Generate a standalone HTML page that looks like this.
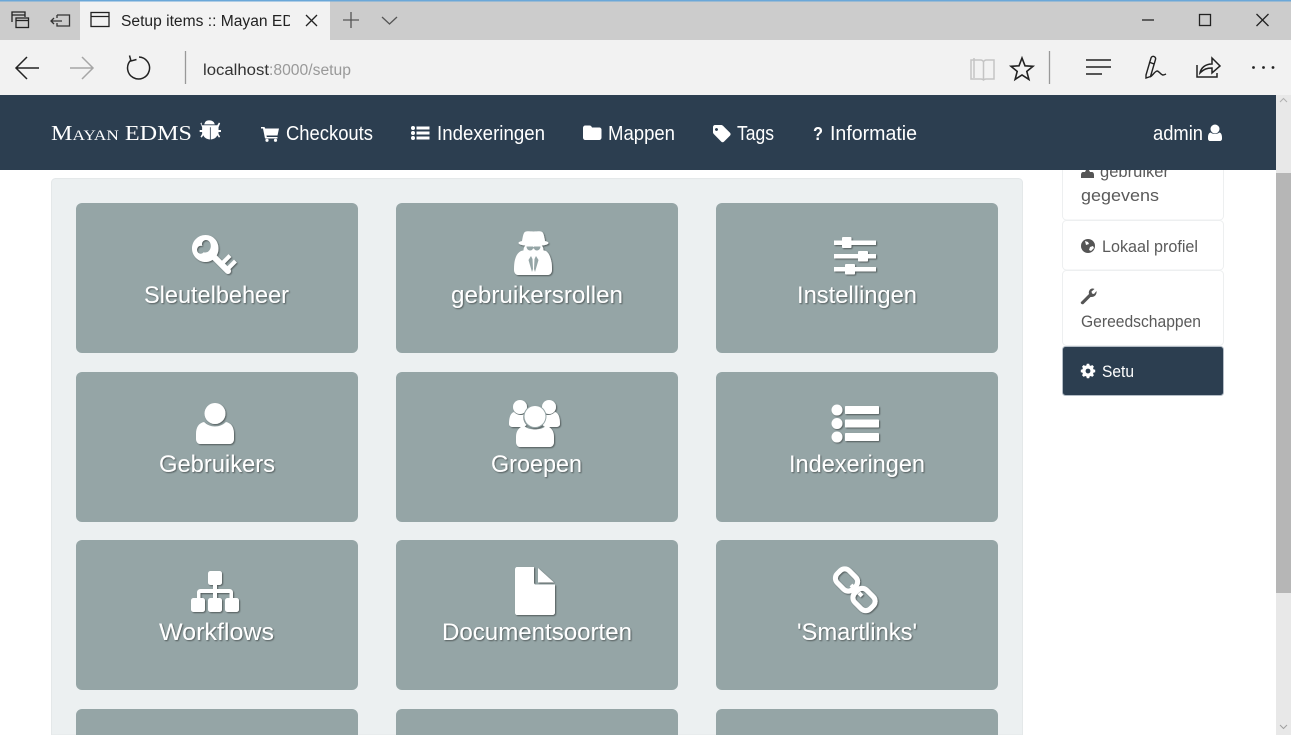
<!DOCTYPE html>
<html><head><meta charset="utf-8"><title>Setup items</title>
<style>html,body{margin:0;padding:0;background:#fff;overflow:hidden;width:1291px;height:735px}svg{display:block}text{font-family:"Liberation Sans",sans-serif}</style>
</head><body>
<svg width="1291" height="735" viewBox="0 0 1291 735" xmlns="http://www.w3.org/2000/svg">
<defs>
<filter id="s" x="-20%" y="-20%" width="140%" height="140%"><feDropShadow dx="1" dy="1" stdDeviation="0.7" flood-color="#000" flood-opacity=".45"/></filter>
<clipPath id="tabc"><rect x="118" y="5" width="172" height="30"/></clipPath>
<clipPath id="sidec"><rect x="1050" y="170" width="200" height="40"/></clipPath>
</defs>
<rect width="1291" height="735" fill="#fff"/>

<!-- page: well and tiles -->
<path d="M51.500 735V182.500c0-2.200 1.800-4 4-4h963c2.200 0 4 1.800 4 4V735z" fill="#ecf0f1" stroke="#e4e8e9"/>
<g fill="#95a5a6">
<rect x="76" y="203" width="282" height="150" rx="6"/><rect x="396" y="203" width="282" height="150" rx="6"/><rect x="716" y="203" width="282" height="150" rx="6"/>
<rect x="76" y="372" width="282" height="150" rx="6"/><rect x="396" y="372" width="282" height="150" rx="6"/><rect x="716" y="372" width="282" height="150" rx="6"/>
<rect x="76" y="540" width="282" height="150" rx="6"/><rect x="396" y="540" width="282" height="150" rx="6"/><rect x="716" y="540" width="282" height="150" rx="6"/>
<path d="M76 735V715c0-3.300 2.700-6 6-6h270c3.300 0 6 2.700 6 6v20zM396 735V715c0-3.300 2.700-6 6-6h270c3.300 0 6 2.700 6 6v20zM716 735V715c0-3.300 2.700-6 6-6h270c3.300 0 6 2.700 6 6v20z"/>
</g>

<g filter="url(#s)" fill="#fff">
<!-- key -->
<g>
<path fill-rule="evenodd" d="M192 248.500c0-7.500 6-13.500 13.500-13.500s13 6 13 13.500-6 13.500-13 13.500-13.500-6-13.500-13.500zM197 250c0 2 1.500 3.700 3.500 3.700 1.300 0 2.400-.6 3.100-1.500 1 .4 2 .4 3 .1 2.500-.7 4.200-3.300 4.200-6.300 0-3-1.600-6-4.700-6-2 0-3.500 1.300-4 3-.3 1-.2 2 .2 3-.5-.2-1-.2-1.500-.2-2 0-3.800 1.700-3.800 4.200z"/>
<path d="M212.500 255.500L228 271" stroke="#fff" stroke-width="6" stroke-linecap="round" fill="none"/>
<path d="M223 262.500l5.500-5.500M228.500 268l5.500-5.500" stroke="#fff" stroke-width="4" stroke-linecap="square" fill="none"/>
</g>
<!-- spy -->
<path d="M524 233c1.500-2.500 4-1.500 9.500-1.500s8-1 9.500 1.500c1 2 1.500 5 2 8 2 .5 3.500 1 3.500 2s-2.500 2-5.500 2.500h-19c-3-.5-5.500-1.500-5.500-2.500s1.500-1.500 3.500-2c.5-3 1-6 2-8z"/>
<ellipse cx="533.500" cy="250" rx="10" ry="8"/>
<path d="M521 251l6-1.500c2 4 4 6 6.500 6s4.500-2 6.500-6l6 1.500c3 2 4.500 6 5.500 11 .5 3 .5 6 .5 8 0 3-2 5-4 5h-30c-2 0-4-2-4-5 0-2 0-5 .5-8 1-5 2.500-9 6.500-11z"/>
<g fill="#95a5a6">
<path d="M526 246.500h6.500c.5 0 1 .3 1 .8.2-.5.6-.8 1-.8h6c0 2-1.500 4-3.500 4-1.500 0-2.500-.8-3-2h-1c-.5 1.200-1.500 2-3 2-2 0-3.500-2-3.500-4z"/>
<path d="M531 256l-2.500 4 3.500 12 1-3-.5-10zM536 256l2.500 4-3.500 12-1-3 .5-10z"/>
</g>
<!-- sliders -->
<rect x="834" y="240.500" width="42" height="4.500"/><rect x="842" y="237" width="9.500" height="11" rx="1"/>
<rect x="834" y="254" width="42" height="4.500"/><rect x="858" y="251" width="10" height="10.500" rx="1"/>
<rect x="834" y="267" width="42" height="4.500"/><rect x="845" y="264" width="10" height="10.500" rx="1"/>
<!-- user -->
<circle cx="215" cy="413.500" r="10.500"/><path d="M204 422c3 3 7 4.500 11 4.500s8-1.500 11-4.500c5 1 8 5 8 12v5c0 3-2 5-4 5h-30c-2 0-4-2-4-5v-5c0-7 3-11 8-12z"/>
<!-- group -->
<circle cx="520" cy="407" r="7"/><circle cx="549" cy="407" r="7"/>
<path d="M514 412c2 2 4 3 7 3 1 0 2 0 2.500-.5-1 4 .5 8 3 10.500l-2.500 2h-11c-2 0-4-1-4-3 0-5 1-11 5-12zM555 412c-2 2-4 3-7 3-1 0-2 0-2.500-.5 1 4-.5 8-3 10.500l2.500 2h11c2 0 4-1 4-3 0-5-1-11-5-12z"/>
<circle cx="535" cy="416.500" r="11.500" fill="#95a5a6"/>
<circle cx="535" cy="416.500" r="10.500"/>
<path d="M524 426c3 2.500 7 3.500 11 3.500s8-1 11-3.500c5 1 8 5 8 11v5c0 3-2 5-4 5h-30c-2 0-4-2-4-5v-5c0-6 3-10 8-11z"/>
<!-- list -->
<circle cx="837" cy="410" r="5.500"/><circle cx="837" cy="423.500" r="5.500"/><circle cx="837" cy="437" r="5.500"/>
<rect x="845" y="406" width="34" height="8" rx=".8"/><rect x="845" y="419.500" width="34" height="8" rx=".8"/><rect x="845" y="433" width="34" height="8" rx=".8"/>
<!-- sitemap -->
<rect x="208" y="571" width="14" height="14" rx="2.500"/>
<path d="M213 585h4v4h12.500c2 0 3.500 1.500 3.500 3.500v6h-3.500V593H217v5.500h-4V593h-12.500v5.500H197v-6c0-2 1.500-3.500 3.500-3.500H213z"/>
<rect x="191" y="598" width="14" height="14" rx="2.500"/><rect x="208" y="598" width="14" height="14" rx="2.500"/><rect x="225" y="598" width="14" height="14" rx="2.500"/>
<!-- file -->
<path d="M517 567h17v16c0 1 .8 1.500 1.500 1.500H555v28c0 1.200-1 2.500-2.500 2.500h-35.500c-1.200 0-2-1.200-2-2.500v-43c0-1.500.8-2.500 2-2.500zM538 568l16 14.500h-16z"/>
<!-- chain -->
<g fill="none" stroke="#fff" stroke-width="5">
<rect x="835.500" y="571.500" width="22" height="17" rx="6.500" transform="rotate(45 846.500 580)"/>
<rect x="853" y="591" width="22" height="17" rx="6.500" transform="rotate(45 864 599.500)"/>
</g>
<path d="M851 585l3 3M859 593l3 3" stroke="#fff" stroke-width="4" fill="none"/>
</g>

<g fill="#fff" font-size="24" filter="url(#s)">
<text x="144" y="303" textLength="145" lengthAdjust="spacingAndGlyphs">Sleutelbeheer</text>
<text x="451" y="303" textLength="172" lengthAdjust="spacingAndGlyphs">gebruikersrollen</text>
<text x="797" y="303" textLength="120" lengthAdjust="spacingAndGlyphs">Instellingen</text>
<text x="159" y="472" textLength="116" lengthAdjust="spacingAndGlyphs">Gebruikers</text>
<text x="491" y="472" textLength="91" lengthAdjust="spacingAndGlyphs">Groepen</text>
<text x="789" y="472" textLength="136" lengthAdjust="spacingAndGlyphs">Indexeringen</text>
<text x="159" y="640" textLength="115" lengthAdjust="spacingAndGlyphs">Workflows</text>
<text x="442" y="640" textLength="190" lengthAdjust="spacingAndGlyphs">Documentsoorten</text>
<text x="797" y="640" textLength="120" lengthAdjust="spacingAndGlyphs">'Smartlinks'</text>
</g>

<!-- sidebar -->
<g fill="#fff" stroke="#edeff0">
<rect x="1062.500" y="150" width="161" height="70" rx="4"/>
<rect x="1062.500" y="220.500" width="161" height="49.500" rx="4"/>
<rect x="1062.500" y="270.500" width="161" height="75" rx="4"/>
</g>
<rect x="1062.500" y="346.500" width="161" height="49" rx="3" fill="#2c3e50" stroke="#b4bdc6"/>
<g font-size="17" fill="#5a5a5a">
<g clip-path="url(#sidec)"><text x="1100" y="177" textLength="69" lengthAdjust="spacingAndGlyphs">gebruiker</text><path d="M1081 178v-3c0-2 1-3 2-3h2l1-2h3l1 2h2c1 0 2 1 2 3v3z" fill="#555"/></g>
<text x="1081" y="201" textLength="78" lengthAdjust="spacingAndGlyphs">gegevens</text>
<text x="1102" y="252" textLength="96" lengthAdjust="spacingAndGlyphs">Lokaal profiel</text>
<text x="1081" y="327" textLength="120" lengthAdjust="spacingAndGlyphs">Gereedschappen</text>
<text x="1102" y="377" textLength="32" lengthAdjust="spacingAndGlyphs" fill="#fff">Setu</text>
</g>
<!-- globe -->
<circle cx="1088" cy="246" r="7" fill="#555"/><path d="M1085 241l3 1 1 2-3 1zM1090 247l3-1 1 2-3 3-2-1z" fill="#fff"/>
<!-- wrench -->
<path d="M1082 299l7-7c-.8-3 1-5 3-5.500 1 0 2 0 2.500.5l-3 2.500.5 2 2 .5 2.500-3c.5 3-1.500 6.500-6 6l-7 7c-1.500 1-3.500-1-2.500-2z" fill="#555" transform="translate(0,2)"/>
<!-- gear -->
<g fill="#fff" transform="translate(1088,371) scale(.8) translate(-1088,-373)"><path fill-rule="evenodd" d="M1086.500 364h3l.5 2 1.500.6 1.800-1.100 2.100 2.100-1.100 1.800.6 1.600 2.100.5v3l-2.100.5-.6 1.500 1.100 1.800-2.100 2.100-1.800-1.100-1.500.6-.5 2.100h-3l-.5-2.100-1.600-.6-1.800 1.100-2.100-2.100 1.100-1.800-.6-1.500-2-.5v-3l2-.5.6-1.600-1.100-1.800 2.100-2.100 1.800 1.100 1.600-.6zM1088 370a3 3 0 1 0 .01 0z"/></g>

<!-- scrollbar -->
<rect x="1276" y="95" width="15" height="640" fill="#e8e8e8"/>
<rect x="1276" y="173" width="15" height="420" fill="#b6b6b6"/>
<path d="M1280 102l3.500-3.500 3.500 3.500" fill="none" stroke="#b0b0b0"/>
<path d="M1280 725l3.500 3.500 3.500-3.500" fill="none" stroke="#a0a0a0"/>

<!-- navbar -->
<rect x="0" y="95" width="1276" height="75" fill="#2c3e50"/>
<g fill="#fff">
<text x="51" y="140" font-size="21" textLength="141" lengthAdjust="spacingAndGlyphs" style="font-family:'Liberation Serif',serif;font-variant:small-caps">Mayan EDMS</text>
<!-- bug -->
<g transform="translate(209.500,131) scale(.82,.95) translate(-209.500,-133)"><path d="M204 124c1-3 9-3 11 0l1 2h-13zM200 127h19l2-3 1.500 1-2 4v3h3v2h-3v2l2 3-1.500 1-2-2.500c-1 2-3 4-8 4.500v-13h-1v13c-5-.5-7-2.500-8-4.500l-2 2.500-1.500-1 2-3v-2h-3v-2h3v-3l-2-4 1.500-1z"/></g>
<!-- cart -->
<path d="M261 127h3.500l.7 1.500h13.800l-1.500 7h-11l.3 1.500h10.700v1.500h-12.500L263 128.500h-2z"/><circle cx="267" cy="140.300" r="1.600"/><circle cx="275.500" cy="140.300" r="1.600"/>
<!-- list -->
<circle cx="413" cy="128" r="2"/><circle cx="413" cy="133" r="2"/><circle cx="413" cy="138" r="2"/>
<rect x="416.500" y="126.500" width="13" height="3"/><rect x="416.500" y="131.500" width="13" height="3"/><rect x="416.500" y="136.500" width="13" height="3"/>
<!-- folder -->
<path d="M583 128c0-1.500 1-2.500 2.500-2.500h4c1.500 0 2 1 2.500 2h7.500c1 0 2 1 2 2v8c0 1.500-1 2.500-2.500 2.500h-13.500c-1.500 0-2.500-1-2.500-2.500z"/>
<!-- tag -->
<path fill-rule="evenodd" d="M713 127c0-1.100.9-2 2-2h6c.8 0 1.500.3 2 .8l7 7c.8.8.8 2 0 2.800l-6 6c-.8.8-2 .8-2.800 0l-7.200-7.400c-.6-.6-1-1.200-1-2zM716.500 128a1.500 1.500 0 1 0 .01 0z"/>
<text x="813" y="140" font-size="18" font-weight="bold" textLength="10" lengthAdjust="spacingAndGlyphs">?</text>
<!-- nav user -->
<circle cx="1215" cy="129" r="4.500"/><path d="M1210.500 132.500c2.500 2 6.500 2 9 0 1.800.5 2.500 2.500 2.500 5v1.500c0 1-1 2-2 2h-10c-1 0-2-1-2-2v-1.500c0-2.500.7-4.500 2.500-5z"/>
<g font-size="20">
<text x="286" y="140" textLength="87" lengthAdjust="spacingAndGlyphs">Checkouts</text>
<text x="437" y="140" textLength="108" lengthAdjust="spacingAndGlyphs">Indexeringen</text>
<text x="608" y="140" textLength="67" lengthAdjust="spacingAndGlyphs">Mappen</text>
<text x="737" y="140" textLength="37" lengthAdjust="spacingAndGlyphs">Tags</text>
<text x="830" y="140" textLength="87" lengthAdjust="spacingAndGlyphs">Informatie</text>
<text x="1153" y="140" textLength="50" lengthAdjust="spacingAndGlyphs">admin</text>
</g></g>

<!-- browser chrome -->
<rect x="0" y="0" width="1291" height="40" fill="#cccccc"/>
<rect x="0" y="0" width="1291" height="1.500" fill="#6aa7d8"/>
<rect x="80" y="1.500" width="250" height="38.500" fill="#f2f2f2"/>
<rect x="0" y="40" width="1291" height="55" fill="#f2f2f2"/>

<g fill="none" stroke="#222" stroke-width="1.300">
<!-- tab actions -->
<path d="M12 22V12h13v5M12 15h13"/><rect x="16" y="18" width="12.500" height="9.500" fill="#ccc"/><path d="M16 20.500h12.500"/>
<path d="M57 15h12.500v11H57v-3M57 18v-3M51 21h11M54 18l-3 3 3 3" stroke="#333"/>
<rect x="91" y="12.500" width="18" height="14"/><path d="M91 16.500h18"/>
<path d="M306 15l11 11M317 15l-11 11"/>
<path d="M343 20h16M351 12v16" stroke="#555"/>
<path d="M382 17l7.500 7 7.500-7" stroke="#555"/>
<!-- window -->
<path d="M1142 20h12"/><rect x="1199.500" y="14.500" width="11" height="11"/><path d="M1256.500 14l12 12M1268.500 14l-12 12"/>
<!-- nav -->
<path d="M16 68h23M27 57l-11 11 11 11" stroke-width="1.500"/>
<path d="M70 68h23M82 57l11 11-11 11" stroke="#a6a6a6" stroke-width="1.500"/>
<path d="M130.500 60.500A11 11 0 1 0 139 57M129.500 55.500l1.500 5.500 5.500-1.500" stroke-width="1.500"/>
<path d="M185.500 51v33M1049.500 51v33" stroke="#999"/>
<!-- reading -->
<path d="M971 60h10c1 0 2 1 2.500 1.500.5-.5 1.500-1.500 2.500-1.500h8v19h-8c-1 0-2 .5-2.500 1-.5-.5-1.500-1-2.500-1h-10zM983.500 61.500V80M974 58v20" stroke="#c4c4c4" stroke-width="1.500"/>
<path d="M1022 58l3 7.800 8 .5-6.200 5.100 2.100 8-6.900-4.500-6.900 4.500 2.100-8-6.200-5.100 8-.5z" stroke-width="1.600"/>
<path d="M1086 60h25M1086 67h25M1086 74h16" stroke-width="1.500"/>
<path d="M1146 75l5-17c.5-1.500 2-2 3-1.500s2 1.500 1.500 3l-5 17-4.500 1.500zM1149 62l5 2M1150 77c3-1.500 4-5 7-6 2 0 4 4 6 4 1 0 2-.5 3-1" stroke-width="1.400"/>
<path d="M1197 65v12h20v-4M1200 73c1-5 5-9 12-9v-6l8 8-8 7v-5c-5 0-8 1-12 5z" stroke-width="1.500"/>
</g>
<g fill="#222"><circle cx="1253.500" cy="67.500" r="1.400"/><circle cx="1263.500" cy="67.500" r="1.400"/><circle cx="1273" cy="67.500" r="1.400"/></g>
<g clip-path="url(#tabc)"><text x="121" y="26" font-size="15.500" fill="#222" textLength="196" lengthAdjust="spacingAndGlyphs">Setup items :: Mayan EDMS</text></g>
<text x="203" y="75" font-size="15.500" fill="#333" textLength="66" lengthAdjust="spacingAndGlyphs">localhost</text>
<text x="269" y="75" font-size="15.500" fill="#999" textLength="82" lengthAdjust="spacingAndGlyphs">:8000/setup</text>
</svg>
</body></html>
